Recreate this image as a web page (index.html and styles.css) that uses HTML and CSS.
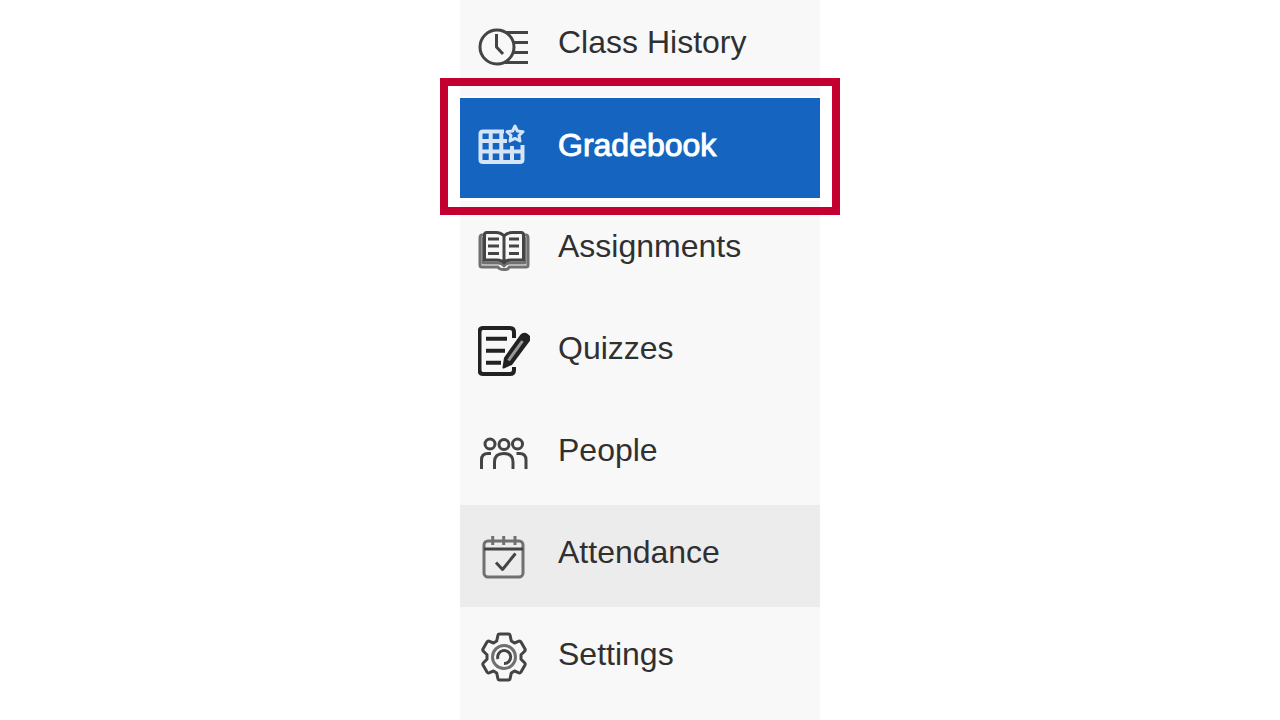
FILE: index.html
```html
<!DOCTYPE html>
<html lang="en">
	<head>
		<meta charset="UTF-8">
		<meta name="viewport" content="width=device-width, initial-scale=1.0">
		<title>Course menu</title>
		<link rel="stylesheet" href="styles.css">
	</head>
	<body>
		<nav class="course-menu" aria-label="Course menu">
			<ul>
				<li>
					<a href="#history">
						<svg class="icon" viewBox="0 0 52 52" aria-hidden="true">
							<circle cx="19" cy="27" r="17" />
							<path d="M18.5 14V27L25 34M27 12.5H50M35 22.5H50M35 32.5H50M27 42.5H50" />
						</svg>
						<span>Class History</span>
					</a>
				</li>
				<li class="active">
					<a href="#gradebook" aria-current="page">
						<svg class="icon" viewBox="0 0 52 52" aria-hidden="true">
							<path d="M26 9.5H5Q2.5 9.5 2.5 12V37.5Q2.5 40 5 40H42Q44.5 40 44.5 37.5V23M12.7 9.5V40M23.3 9.5V40M34 24V40M2.5 19H29M2.5 29.5H44.5" />
							<path class="star" d="M37 4L39.4 9L45 9.7L41 13.5L42 19L37 16.4L32 19L33 13.5L29 9.7L34.6 9Z" />
						</svg>
						<span>Gradebook</span>
					</a>
				</li>
				<li>
					<a href="#assignments">
						<svg class="icon" viewBox="0 0 52 52" aria-hidden="true">
							<path class="soft" d="M7 11H4Q2 11 2 14V41Q2 43 4 43H20Q21 45.5 26 45.5T31 43H48Q50 43 50 41V14Q50 11 48 11H45" />
							<path class="soft" d="M5 13V39H20Q24 39 26 42Q28 39 32 39H47V13" />
							<path d="M26 12Q23 8.5 18 8.5H9Q6.5 8.5 6.5 11V36H19Q24 36 26 39Q28 36 33 36H45.5V11Q45.5 8.5 43 8.5H34Q29 8.5 26 12V38" />
							<path d="M10 15H21M10 22H21M10 29.5H21M31 15H41M31 22H41M31 29.5H41" />
						</svg>
						<span>Assignments</span>
					</a>
				</li>
				<li>
					<a href="#quizzes">
						<svg class="icon dark" viewBox="0 0 52 52" aria-hidden="true">
							<path d="M36 12V6Q36 2 32 2H5Q1.5 2 1.5 6V44Q1.5 48 5 48H32Q36 48 36 44V41" />
							<path d="M8 12.7H29M8 24.7H27M8 36.7H23" />
							<path class="pencil" d="M25.5 41.5L27 32L43 9.5Q46 6.500 49.500 9T51 14.500L33.500 38Z" />
							<path class="groove" d="M30.5 34.5L44.5 15" />
						</svg>
						<span>Quizzes</span>
					</a>
				</li>
				<li>
					<a href="#people">
						<svg class="icon" viewBox="0 0 52 52" aria-hidden="true">
							<circle cx="12" cy="16" r="5" />
							<circle cx="26" cy="16.5" r="5" />
							<circle cx="39.5" cy="16" r="5" />
							<path d="M3.5 41V32Q3.5 25.5 10 25.5H13M16.5 41V34Q16.5 25.5 25.7 25.5T35 34V41M38.5 25.5H41.5Q48 25.5 48 32V41" />
						</svg>
						<span>People</span>
					</a>
				</li>
				<li class="hovered">
					<a href="#attendance">
						<svg class="icon" viewBox="0 0 52 52" aria-hidden="true">
							<rect class="soft" x="6" y="11" width="39" height="36" rx="4" />
							<path d="M6 19H45M18 32.5L24.5 39.5L37.5 23.5" />
							<path class="soft" d="M14.7 6V15M25.7 6V15M37 6V15" />
						</svg>
						<span>Attendance</span>
					</a>
				</li>
				<li>
					<a href="#settings">
						<svg class="icon" viewBox="0 0 52 52" aria-hidden="true">
							<path d="M18.7 9L20 3Q20.2 2 21.5 2H30.5Q31.8 2 32 3L33.3 9L36.5 11L41 9.2Q42.2 8.8 43 10L47 17Q47.6 18.2 46.6 19.2L43 22.8V27.2L46.6 30.8Q47.6 31.8 47 33L43 40Q42.2 41.2 41 40.8L36.5 39L33.3 41L32 47Q31.8 48 30.5 48H21.5Q20.2 48 20 47L18.7 41L15.5 39L11 40.8Q9.8 41.2 9 40L5 33Q4.4 31.8 5.4 30.8L9 27.2V22.8L5.4 19.2Q4.4 18.2 5 17L9 10Q9.8 8.8 11 9.2L15.5 11Z" />
							<circle class="soft" cx="26" cy="25" r="11.5" />
							<path d="M20 27A6.5 6.5 0 1 1 26 31.5" />
						</svg>
						<span>Settings</span>
					</a>
				</li>
			</ul>
		</nav>
	</body>
</html>
```
FILE: styles.css
```css
* {
	box-sizing: border-box;
}

body {
	margin: 0;
	background-color: #fff;
	font-family: "Liberation Sans", Arial, sans-serif;
}

.course-menu {
	display: flex;
	flex-direction: column;
	width: 100%;
	max-width: 360px;
	min-height: 100vh;
	margin: 0 auto;
	background-color: #f8f8f8;
}

.course-menu ul {
	list-style: none;
	margin: -5px 0 0;
	padding: 0;
}

.course-menu li {
	position: relative;
}

.course-menu a {
	display: flex;
	align-items: center;
	gap: 28px;
	min-height: 102px;
	padding: 0 18px;
	color: #303030;
	font-size: 32px;
	line-height: 40px;
	text-decoration: none;
}

.course-menu span {
	padding-bottom: 8px;
}

.course-menu .hovered {
	background-color: #ececec;
}

.course-menu .active {
	background-color: #1565c0;
	border: solid #fff;
	border-width: 1px 0;
	box-shadow: 0 -1px #fff, 0 2px #fff;
}

.course-menu .active a {
	min-height: 100px;
	color: #fff;
	-webkit-text-stroke: 1px #fff;
}

.course-menu .active span {
	padding-bottom: 6px;
}

/* red frame around the current item */
.course-menu .active::after {
	content: "";
	position: absolute;
	inset: -20px -20px -17px;
	border: 8px solid #c3002f;
	pointer-events: none;
	z-index: 1;
}

.icon {
	flex: none;
	width: 52px;
	height: 52px;
	fill: none;
	stroke: #444;
	stroke-width: 3;
	stroke-linejoin: round;
}

.icon .soft {
	stroke: #707070;
}

.dark {
	stroke: #222;
	stroke-width: 4;
}

.dark .pencil {
	fill: #222;
	stroke-width: 2;
}

.dark .groove {
	stroke: #999;
	stroke-width: 3;
}

.active .icon {
	stroke: #d5e4f6;
	stroke-width: 4;
}

.active .star {
	stroke-width: 3;
}
```
